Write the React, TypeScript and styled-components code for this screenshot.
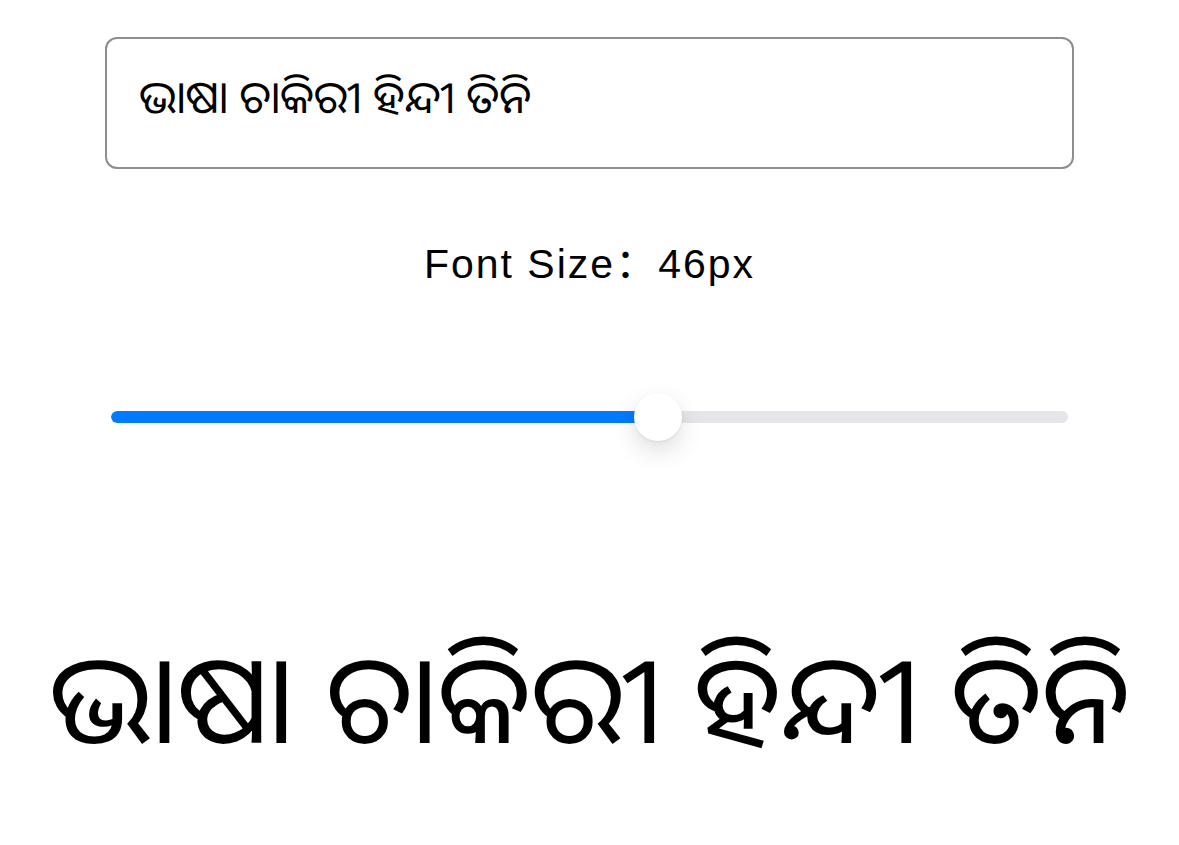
import React, { useState } from 'react';
import styled, { createGlobalStyle } from 'styled-components';

const GlobalStyle = createGlobalStyle`
  html, body {
    margin: 0;
    padding: 0;
    background: #ffffff;
  }
  body {
    font-family: "Liberation Sans", "Noto Sans", "Noto Sans CJK SC", sans-serif;
    color: #000;
  }
`;

const Page = styled.div`
  width: 1179px;
  display: flex;
  flex-direction: column;
  align-items: center;
  padding-top: 37px;
`;

const TextInput = styled.input`
  box-sizing: border-box;
  width: 969px;
  height: 132px;
  border: 2px solid #8e8e8e;
  border-radius: 12px;
  padding: 0 32px 16px;
  font-family: "Noto Sans Oriya", "Noto Sans", "Lohit Odia", sans-serif;
  font-size: 45px;
  color: #000;
  background: #fff;
  outline: none;
`;

const SizeLabel = styled.div`
  margin-top: 71px;
  font-size: 41px;
  line-height: 48px;
  letter-spacing: 2px;
  font-family: "Liberation Sans", "Noto Sans CJK SC", sans-serif;
`;

const SliderWrap = styled.div`
  position: relative;
  margin-top: 105px;
  width: 957px;
  height: 48px;
  display: flex;
  align-items: center;
`;

const Track = styled.div`
  width: 100%;
  height: 12px;
  border-radius: 6px;
  background: #e5e5ea;
  overflow: hidden;
`;

const Fill = styled.div`
  height: 100%;
  background: #007aff;
  border-radius: 6px 0 0 6px;
`;

const Thumb = styled.div`
  position: absolute;
  top: 0;
  width: 48px;
  height: 48px;
  margin-left: -24px;
  border-radius: 50%;
  background: #fff;
  box-shadow: 0 10px 24px rgba(0, 0, 0, 0.13), 0 1px 3px rgba(0, 0, 0, 0.08);
`;

const Preview = styled.div<{ size: number }>`
  margin-top: 180px;
  font-family: "Noto Sans Oriya", "Noto Sans", "Lohit Odia", sans-serif;
  font-size: ${({ size }) => Math.round(size * 2.7)}px;
  line-height: 1.2;
  white-space: nowrap;
`;

const App = () => {
  const [text] = useState('ଭାଷା ଚାକିରୀ ହିନ୍ଦୀ ତିନି');
  const [size] = useState(46);
  const min = 10;
  const max = 73;
  const pct = ((size - min) / (max - min)) * 100;

  return (
    <>
      <GlobalStyle />
      <Page>
        <TextInput value={text} readOnly />
        <SizeLabel>Font Size：{size}px</SizeLabel>
        <SliderWrap>
          <Track>
            <Fill style={{ width: `${pct}%` }} />
          </Track>
          <Thumb style={{ left: `${pct}%` }} />
        </SliderWrap>
        <Preview size={size}>{text}</Preview>
      </Page>
    </>
  );
};

export default App;
